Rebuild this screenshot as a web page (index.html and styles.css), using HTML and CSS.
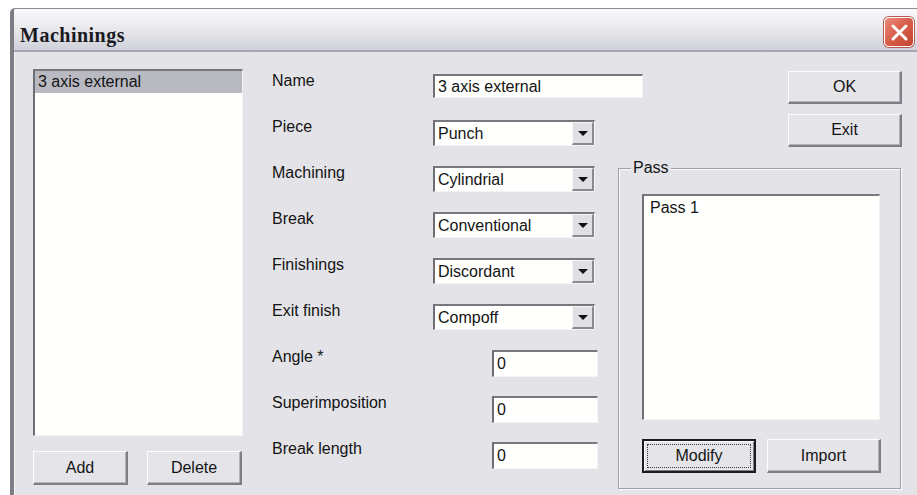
FILE: index.html
```html
<!DOCTYPE html>
<html lang="en">
<head>
<meta charset="utf-8">
<title>Machinings</title>
<link rel="stylesheet" href="styles.css">
</head>
<body>
<div class="window">
  <div class="titlebar">
    <span class="title">Machinings</span>
    <button class="close" type="button" aria-label="Close">
      <svg width="19" height="19" viewBox="0 0 19 19"><path d="M3 3 L16 16 M16 3 L3 16" stroke="#fff" stroke-width="3" stroke-linecap="round"/></svg>
    </button>
  </div>
  <div class="client">
    <div class="left-col">
      <div class="listbox main-list">
        <div class="item selected">3 axis external</div>
      </div>
      <div class="btn-row">
        <button class="btn add" type="button">Add</button>
        <button class="btn del" type="button">Delete</button>
      </div>
    </div>

    <div class="form">
      <span class="lbl">Name</span>
      <div class="edit wide">3 axis external</div>

      <span class="lbl">Piece</span>
      <div class="combo"><span class="val">Punch</span><span class="drop"><i></i></span></div>

      <span class="lbl">Machining</span>
      <div class="combo"><span class="val">Cylindrial</span><span class="drop"><i></i></span></div>

      <span class="lbl">Break</span>
      <div class="combo"><span class="val">Conventional</span><span class="drop"><i></i></span></div>

      <span class="lbl">Finishings</span>
      <div class="combo"><span class="val">Discordant</span><span class="drop"><i></i></span></div>

      <span class="lbl">Exit finish</span>
      <div class="combo"><span class="val">Compoff</span><span class="drop"><i></i></span></div>

      <span class="lbl">Angle *</span>
      <div class="edit num">0</div>

      <span class="lbl">Superimposition</span>
      <div class="edit num">0</div>

      <span class="lbl">Break length</span>
      <div class="edit num">0</div>
    </div>

    <div class="right-col">
      <button class="btn side ok" type="button">OK</button>
      <button class="btn side exit" type="button">Exit</button>
      <div class="group">
        <span class="legend">Pass</span>
        <div class="listbox pass-list">
          <div class="item">Pass 1</div>
        </div>
        <div class="pass-btns">
          <button class="btn default" type="button"><span class="focus">Modify</span></button>
          <button class="btn" type="button">Import</button>
        </div>
      </div>
    </div>
  </div>
</div>
</body>
</html>
```

FILE: styles.css
```css
* { box-sizing: border-box; }

html, body {
  margin: 0;
  padding: 0;
  background: #ffffff;
  overflow: hidden;
}

body {
  width: 917px;
  height: 495px;
  font-family: "Liberation Sans", Arial, sans-serif;
  font-size: 16px;
  color: #141414;
}

/* dialog frame */
.window {
  margin: 8px 0 0 10px;
  width: 907px;
  height: 487px;
  border-left: 4px solid #7d7d86;
  border-top: 1px solid #8c8c96;
  border-top-left-radius: 5px;
  box-shadow: inset 1px 0 0 #c8c8d0;
  background: #e3e3e8;
  display: flex;
  flex-direction: column;
  overflow: hidden;
}

.titlebar {
  height: 43px;
  flex: none;
  display: flex;
  align-items: flex-start;
  justify-content: space-between;
  padding: 15px 3px 0 6px;
  background: linear-gradient(#fafafb 0%, #eeeef1 35%, #dcdce3 75%, #cfd0d9 100%);
  border-bottom: 2px solid #a6a6b2;
}

.title {
  font-family: "Liberation Serif", "Times New Roman", serif;
  font-weight: bold;
  font-size: 20px;
  line-height: 23px;
  letter-spacing: 0.5px;
  color: #1a1a1e;
}

.close {
  margin-top: -7px;
  width: 30px;
  height: 30px;
  padding: 0;
  border: 1px solid #ffffff;
  border-radius: 5px;
  background: linear-gradient(135deg, #ea8d7c 0%, #d9604c 45%, #c24330 100%);
  box-shadow: 0 0 0 1px #b65a50;
  display: flex;
  align-items: center;
  justify-content: center;
}

.client {
  flex: 1;
  display: flex;
  align-items: flex-start;
  padding: 17px 0 0 18px;
  border-left: 1px solid #f4f4f6;
}

/* sunken white boxes */
.listbox, .edit, .combo {
  background: #fffffd;
  border-top: 2px solid #77777d;
  border-left: 2px solid #6e6e74;
  border-right: 1px solid #f4f4f6;
  border-bottom: 1px solid #f4f4f6;
}

.left-col {
  width: 212px;
  display: flex;
  flex-direction: column;
}

.main-list {
  width: 210px;
  height: 367px;
  padding: 0;
}

.item {
  height: 22px;
  line-height: 22px;
  padding-left: 3px;
  white-space: nowrap;
}

.item.selected {
  background: #b9b9c2;
}

.btn-row {
  display: flex;
  gap: 19px;
  margin-top: 15px;
}

.btn {
  font-family: "Liberation Sans", Arial, sans-serif;
  font-size: 16px;
  color: #141414;
  background: #e4e4e9;
  border-top: 1px solid #fdfdfd;
  border-left: 1px solid #fdfdfd;
  border-right: 2px solid #7e7e86;
  border-bottom: 2px solid #7e7e86;
  box-shadow: inset -1px -1px 0 #b4b4bc;
  padding: 0;
  display: flex;
  align-items: center;
  justify-content: center;
}

.btn-row .btn {
  width: 95px;
  height: 34px;
}

/* label / field grid */
.form {
  margin-left: 27px;
  width: 346px;
  margin-top: 5px;
  display: grid;
  grid-template-columns: 161px 185px;
  grid-auto-rows: 46px;
  align-items: start;
}

.lbl {
  line-height: 16px;
  margin-top: -1px;
  white-space: nowrap;
}

.edit {
  height: 24px;
  line-height: 21px;
  padding-left: 3px;
  white-space: nowrap;
}

.edit.wide {
  width: 210px;
}

.edit.num {
  margin-left: 59px;
  width: 106px;
  height: 27px;
  line-height: 24px;
}

.combo {
  width: 162px;
  height: 26px;
  display: flex;
  align-items: stretch;
}

.combo .val {
  flex: 1;
  padding-left: 3px;
  line-height: 23px;
  white-space: nowrap;
}

.combo .drop {
  width: 22px;
  background: #dfdfe4;
  border-top: 1px solid #f8f8fa;
  border-left: 1px solid #f8f8fa;
  border-right: 2px solid #8a8a92;
  border-bottom: 2px solid #8a8a92;
  display: flex;
  align-items: center;
  justify-content: center;
}

.combo .drop i {
  width: 0;
  height: 0;
  border-left: 5px solid transparent;
  border-right: 5px solid transparent;
  border-top: 5px solid #111;
  margin-top: 1px;
}

/* buttons and pass group on the right */
.right-col {
  margin-left: 0;
  width: 284px;
  display: flex;
  flex-direction: column;
  align-items: flex-end;
}

.btn.side {
  width: 114px;
  height: 33px;
}

.btn.ok { margin-top: 2px; }
.btn.exit { margin-top: 10px; }

.group {
  position: relative;
  align-self: flex-start;
  margin-top: 21px;
  width: 283px;
  height: 321px;
  border: 1px solid #9e9ea8;
  box-shadow: 1px 1px 0 #fbfbfc, inset 1px 1px 0 #fbfbfc;
  padding: 25px 0 0 23px;
}

.legend {
  position: absolute;
  top: -10px;
  left: 12px;
  padding: 0 2px;
  line-height: 18px;
  background: #e3e3e8;
}

.pass-list {
  width: 238px;
  height: 226px;
}

.pass-list .item {
  padding-left: 6px;
  line-height: 24px;
}

.pass-btns {
  display: flex;
  gap: 11px;
  margin-top: 19px;
}

.pass-btns .btn {
  width: 114px;
  height: 34px;
}

.btn.default {
  border: 2px solid #1c1c20;
  box-shadow: inset 1px 1px 0 #fdfdfd, inset -1px -1px 0 #7e7e86;
  padding: 3px;
}

.btn.default .focus {
  width: 100%;
  height: 100%;
  border: 1px dotted #3a3a3e;
  display: flex;
  align-items: center;
  justify-content: center;
}
```
